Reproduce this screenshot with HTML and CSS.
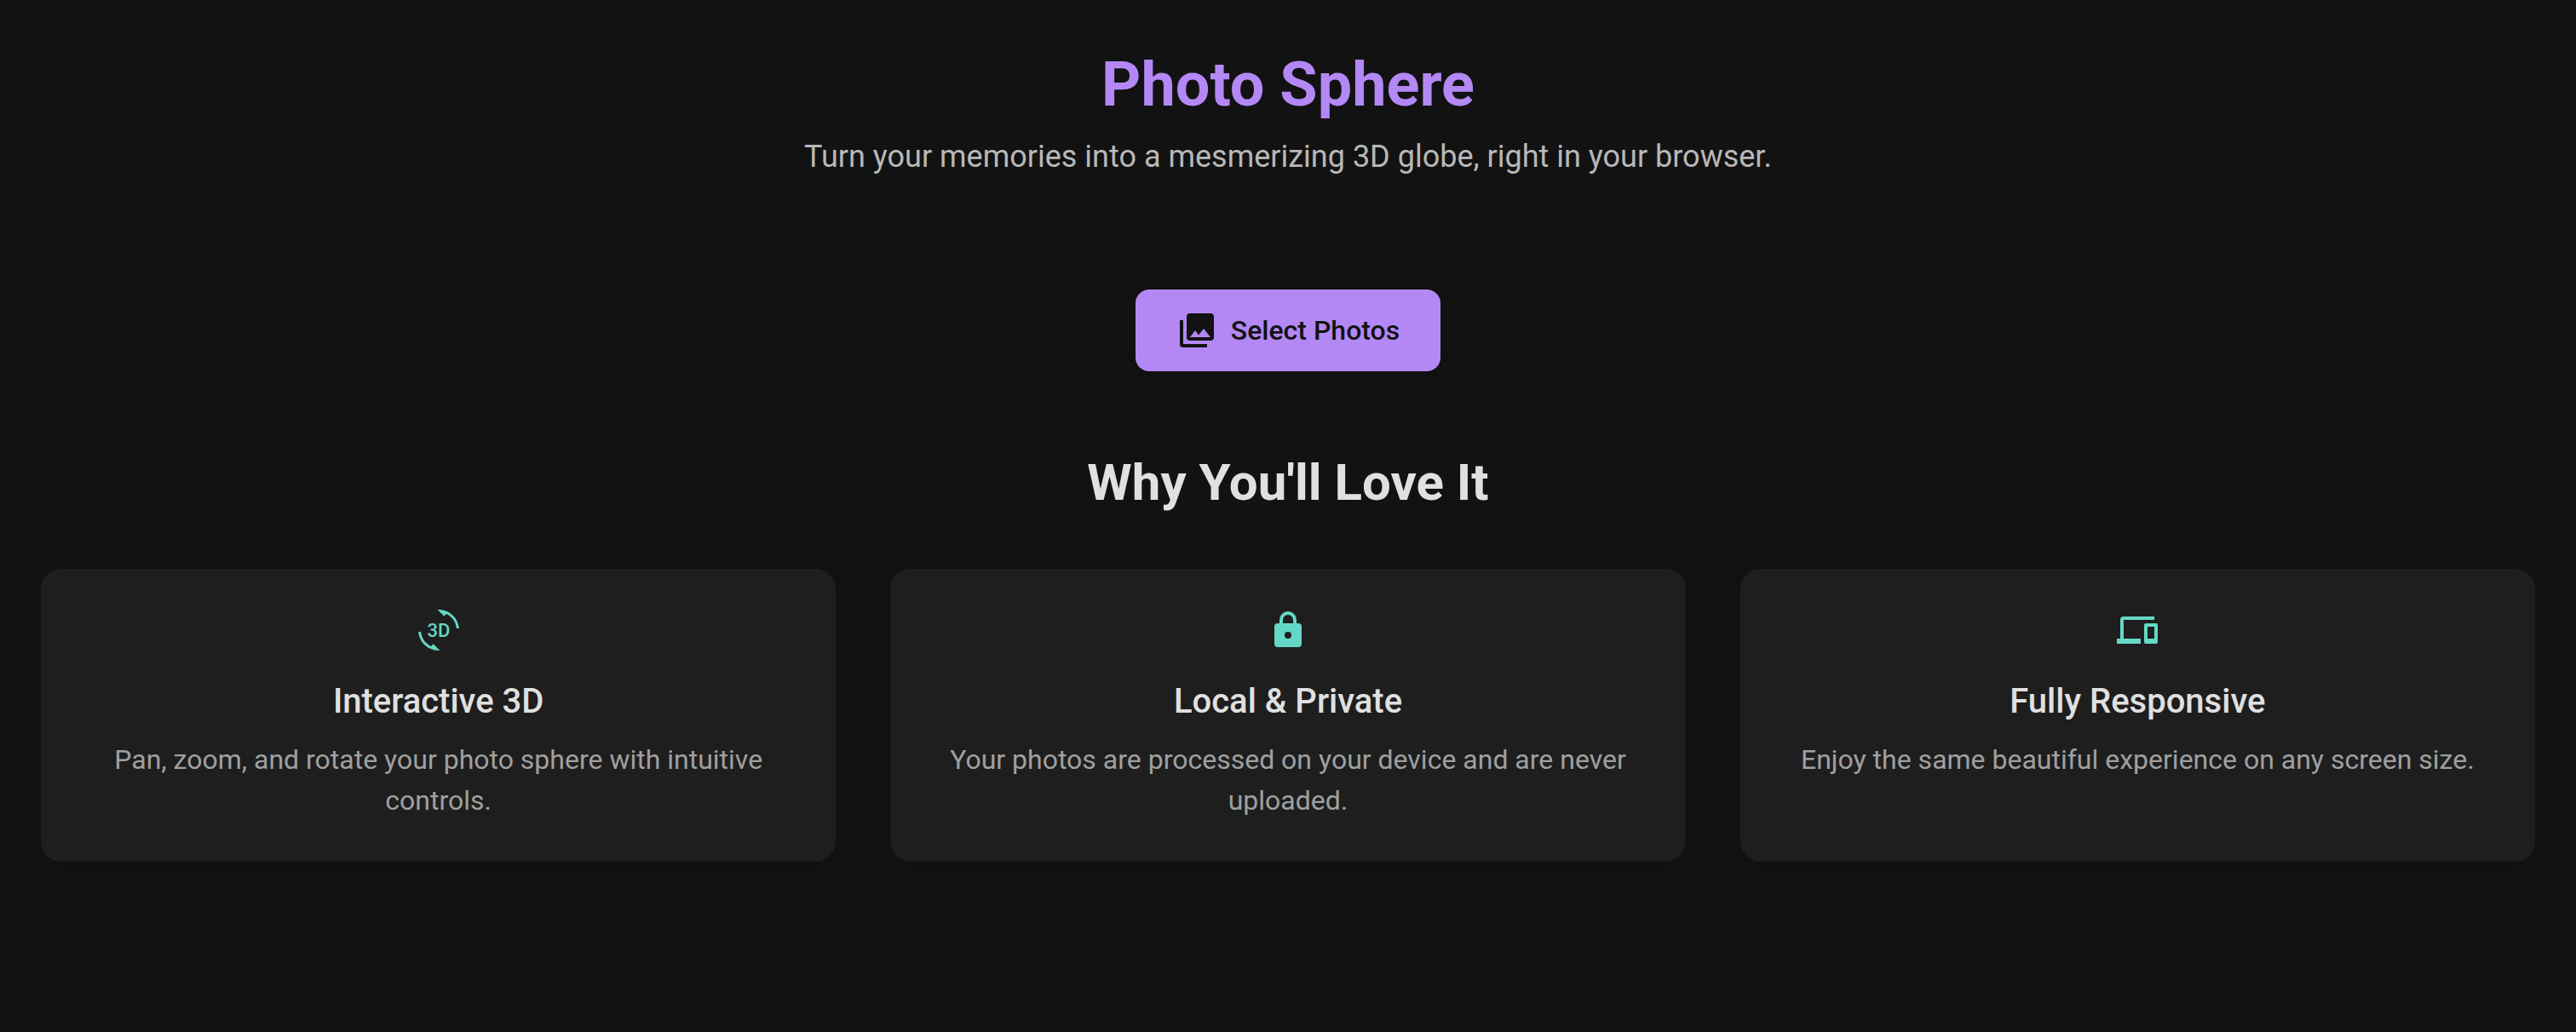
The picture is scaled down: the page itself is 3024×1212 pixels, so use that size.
FILE: index.html
```html
<!DOCTYPE html>
<html lang="en">
<head>
<meta charset="utf-8">
<meta name="viewport" content="width=device-width, initial-scale=1">
<title>Photo Sphere</title>
<link rel="stylesheet" href="styles.css">
</head>
<body>
<header class="hero">
  <h1 class="hero-title">Photo Sphere</h1>
  <p class="hero-subtitle">Turn your memories into a mesmerizing 3D globe, right in your browser.</p>
  <button class="select-button" type="button">
    <svg class="icon" viewBox="0 0 24 24" aria-hidden="true"><path fill-rule="evenodd" d="M8 2h12a2 2 0 0 1 2 2v12a2 2 0 0 1-2 2H8a2 2 0 0 1-2-2V4a2 2 0 0 1 2-2zm0 14h12l-4-5-3 3.7-2-2.7zM2 6h2v14h14v2H4a2 2 0 0 1-2-2z"/></svg>
    <span>Select Photos</span>
  </button>
</header>
<main class="features">
  <h2 class="features-title">Why You'll Love It</h2>
  <div class="feature-grid">
    <article class="card">
      <svg class="icon" viewBox="0 0 24 24" aria-hidden="true"><path d="M7.52 21.48C4.25 19.94 1.91 16.76 1.55 13H.05C.56 19.16 5.71 24 12 24l.66-.03-3.81-3.81zM12 0l-.66.03 3.81 3.81 1.33-1.33c3.27 1.55 5.61 4.72 5.96 8.48h1.5C23.44 4.84 18.29 0 12 0z"/><text class="icon-text" x="12" y="16">3D</text></svg>
      <h3 class="card-title">Interactive 3D</h3>
      <p class="card-text">Pan, zoom, and rotate your photo sphere with intuitive controls.</p>
    </article>
    <article class="card">
      <svg class="icon" viewBox="0 0 24 24" aria-hidden="true"><path fill-rule="evenodd" d="M18 8h-1V6A5 5 0 0 0 7 6v2H6a2 2 0 0 0-2 2v10a2 2 0 0 0 2 2h12a2 2 0 0 0 2-2V10a2 2 0 0 0-2-2zm-6 9a2 2 0 1 1 0-4 2 2 0 0 1 0 4zm3-9H9V6a3 3 0 0 1 6 0z"/></svg>
      <h3 class="card-title">Local &amp; Private</h3>
      <p class="card-text">Your photos are processed on your device and are never uploaded.</p>
    </article>
    <article class="card">
      <svg class="icon" viewBox="0 0 24 24" aria-hidden="true"><path fill-rule="evenodd" d="M4 6h18V4H4a2 2 0 0 0-2 2v11H0v3h14v-3H4zm19 2h-6a1 1 0 0 0-1 1v10a1 1 0 0 0 1 1h6a1 1 0 0 0 1-1V9a1 1 0 0 0-1-1zm-1 9h-4v-7h4z"/></svg>
      <h3 class="card-title">Fully Responsive</h3>
      <p class="card-text">Enjoy the same beautiful experience on any screen size.</p>
    </article>
  </div>
</main>
</body>
</html>
```
FILE: styles.css
```css
* {
  box-sizing: border-box;
}

body {
  margin: 0;
  padding: 48px;
  background: #121212;
  color: #e0e0e0;
  font-family: Roboto, sans-serif;
  text-align: center;
}

h1, h2, h3, p {
  margin: 0;
}

.icon {
  display: block;
  flex: none;
  width: 48px;
  height: 48px;
  fill: currentColor;
}

.icon-text {
  font-size: 11px;
  font-weight: 500;
  text-anchor: middle;
}

.hero {
  display: flex;
  flex-direction: column;
  align-items: center;
}

.hero-title {
  color: #b388f5;
  font-size: 72px;
  font-weight: 700;
  line-height: 104px;
}

.hero-subtitle {
  margin-top: 8px;
  color: #b8b8b8;
  font-size: 36px;
  line-height: 48px;
}

.select-button {
  display: flex;
  align-items: center;
  gap: 16px;
  height: 96px;
  margin-top: 132px;
  padding: 0 48px;
  border: 0;
  border-radius: 16px;
  background: #b388f5;
  box-shadow: 0 8px 24px rgba(0, 0, 0, 0.1);
  color: #121212;
  font: 500 32px/48px Roboto, sans-serif;
  cursor: pointer;
}

.features {
  margin-top: 96px;
}

.features-title {
  font-size: 60px;
  font-weight: 700;
  line-height: 70px;
}

.feature-grid {
  display: grid;
  grid-template-columns: repeat(auto-fit, minmax(560px, 1fr));
  gap: 64px;
  margin-top: 66px;
}

.card {
  display: flex;
  flex-direction: column;
  align-items: center;
  padding: 48px;
  border-radius: 24px;
  background: #1e1e1e;
  box-shadow: 0 8px 24px rgba(0, 0, 0, 0.1);
}

.card .icon {
  color: #64d8c6;
}

.card-title {
  margin-top: 32px;
  font-size: 40px;
  font-weight: 500;
  line-height: 56px;
}

.card-text {
  margin-top: 16px;
  color: #a0a0a0;
  font-size: 32px;
  line-height: 48px;
}
```
